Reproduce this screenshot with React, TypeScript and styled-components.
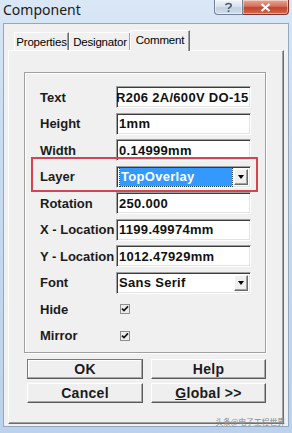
import React from "react";
import styled, { createGlobalStyle } from "styled-components";

const GlobalStyle = createGlobalStyle`
  html, body { margin: 0; padding: 0; background: #c8daef; }
  body { font-family: "Liberation Sans", Arial, sans-serif; }
`;

const Window = styled.div`
  position: relative;
  width: 292px;
  height: 433px;
  display: flex;
  flex-direction: column;
  overflow: hidden;
  background: linear-gradient(180deg, #d9e7f6 0%, #c9dcf1 30%, #bcd2ec 100%);
`;

const TitleBar = styled.div`
  height: 23px;
  display: flex;
  align-items: flex-start;
  padding-left: 3px;
`;

const Title = styled.div`
  font-family: "Noto Sans", "Liberation Sans", sans-serif;
  font-size: 14px;
  color: #1a1a1a;
  margin-top: 0px;
  line-height: 19px;
`;

const Controls = styled.div`
  margin-left: auto;
  margin-right: 3px;
  display: flex;
`;

const CapButton = styled.div<{ $close?: boolean }>`
  width: ${(p) => (p.$close ? 46 : 29)}px;
  height: 15px;
  box-sizing: border-box;
  display: flex;
  align-items: center;
  justify-content: center;
  border: 1px solid ${(p) => (p.$close ? "#7d3226" : "#71829a")};
  border-top: none;
  ${(p) => (p.$close ? "border-left: none;" : "")}
  border-radius: ${(p) => (p.$close ? "0 0 4px 0" : "0 0 0 4px")};
  background: ${(p) =>
    p.$close
      ? "linear-gradient(180deg, #e8a898 0%, #d3705c 45%, #c2432c 55%, #d7684c 100%)"
      : "linear-gradient(180deg, #eef3f9 0%, #d9e3ee 45%, #c1d0e1 55%, #d3dfeb 100%)"};
  box-shadow: inset 0 0 0 1px rgba(255, 255, 255, 0.45);
`;

const Body = styled.div`
  margin: 0 3px 6px 3px;
  background: #f0f0f0;
  border: 1px solid #93a7bf;
  padding: 6px 4px 2px 4px;
  display: flex;
  flex-direction: column;
`;

const TabStrip = styled.div`
  height: 20px;
  display: flex;
  align-items: flex-end;
  padding-left: 6px;
  position: relative;
  z-index: 1;
`;

const Tab = styled.div<{ $active?: boolean; $w: number }>`
  width: ${(p) => p.$w}px;
  height: ${(p) => (p.$active ? 21 : 18)}px;
  box-sizing: border-box;
  margin: ${(p) => (p.$active ? "0 -1px -1px -1px" : "0")};
  background: #f0f0f0;
  border-top: 1px solid #ffffff;
  border-left: 1px solid #ffffff;
  border-right: 1px solid #6d6d6d;
  box-shadow: inset -1px 0 #a0a0a0;
  font-size: 11.5px;
  letter-spacing: -0.2px;
  color: #000;
  display: flex;
  align-items: ${(p) => (p.$active ? "flex-start" : "center")};
  padding-top: ${(p) => (p.$active ? 2 : 0)}px;
  justify-content: center;
  line-height: 14px;
`;

const Panel = styled.div`
  height: 374px;
  box-sizing: border-box;
  border-top: 1px solid #ffffff;
  border-left: 1px solid #ffffff;
  border-right: 1px solid #6d6d6d;
  border-bottom: 1px solid #6d6d6d;
  box-shadow: inset -1px -1px #a0a0a0;
  padding: 21px 17px 0 15px;
  display: flex;
  flex-direction: column;
`;

const Group = styled.div`
  height: 281px;
  box-sizing: border-box;
  border: 1px solid #a0a0a0;
  box-shadow: 1px 1px 0 #ffffff, inset 1px 1px 0 #ffffff;
  padding: 13px 14px 0 15px;
  display: flex;
  flex-direction: column;
  gap: 4.5px;
  position: relative;
`;

const Row = styled.div`
  height: 22px;
  display: grid;
  grid-template-columns: 76px 1fr;
  align-items: center;
`;

const Label = styled.div`
  font-size: 13px;
  font-weight: bold;
  color: #1b1b1b;
  white-space: nowrap;
`;

const Field = styled.div`
  height: 22px;
  box-sizing: border-box;
  background: #ffffff;
  border-top: 1px solid #a0a0a0;
  border-left: 1px solid #a0a0a0;
  border-right: 1px solid #ffffff;
  border-bottom: 1px solid #ffffff;
  box-shadow: inset 1px 1px 0 #3c3c3c, inset -1px -1px 0 #e3e3e3;
  display: flex;
  align-items: center;
  padding-left: 2px;
  overflow: hidden;
  position: relative;
`;

const FieldText = styled.span<{ $shift?: number }>`
  font-size: 13px;
  font-weight: bold;
  letter-spacing: 0.3px;
  color: #111;
  white-space: nowrap;
  margin-left: ${(p) => p.$shift ?? 0}px;
`;

const Selected = styled.div`
  flex: 1;
  height: 18px;
  margin: 0 2px 0 1px;
  background: #3399ff;
  outline: 1px dotted #1d3c66;
  display: flex;
  align-items: center;
  padding-left: 1px;
  font-size: 13px;
  font-weight: bold;
  letter-spacing: 0.3px;
  color: #ffffff;
`;

const Plain = styled.div`
  flex: 1;
  display: flex;
  align-items: center;
  font-size: 13px;
  font-weight: bold;
  letter-spacing: 0.3px;
  color: #111;
`;

const DropButton = styled.div`
  width: 14px;
  height: 16px;
  margin-right: 2px;
  box-sizing: border-box;
  background: #f0f0f0;
  border-top: 1px solid #ffffff;
  border-left: 1px solid #ffffff;
  border-right: 1px solid #6d6d6d;
  border-bottom: 1px solid #6d6d6d;
  box-shadow: inset -1px -1px #a0a0a0;
  display: flex;
  align-items: center;
  justify-content: center;
`;

const Arrow = styled.div`
  width: 0;
  height: 0;
  border-left: 3.5px solid transparent;
  border-right: 3.5px solid transparent;
  border-top: 4px solid #000;
`;

const Highlight = styled.div`
  position: absolute;
  left: 6px;
  top: 84px;
  width: 227px;
  height: 35px;
  box-sizing: border-box;
  border: 2px solid #d6454e;
  pointer-events: none;
`;

const Check = styled.div`
  width: 10px;
  height: 10px;
  margin-left: 4px;
  box-sizing: border-box;
  background: #ececec;
  border: 1px solid #8e8f8f;
  display: flex;
  align-items: center;
  justify-content: center;
`;

const Buttons = styled.div`
  margin: 6px 0 0 3px;
  width: 239px;
  display: grid;
  grid-template-columns: 116px 115px;
  column-gap: 8px;
  row-gap: 4px;
`;

const Button = styled.div<{ $default?: boolean }>`
  height: 20px;
  box-sizing: border-box;
  background: #efefef;
  border-top: 1px solid ${(p) => (p.$default ? "#7a7a7a" : "#ffffff")};
  border-left: 1px solid ${(p) => (p.$default ? "#7a7a7a" : "#ffffff")};
  border-right: 1px solid #5a5a5a;
  border-bottom: 1px solid #5a5a5a;
  box-shadow: inset -1px -1px #a8a8a8${(p) => (p.$default ? ", inset 1px 1px #ffffff" : "")};
  display: flex;
  align-items: center;
  justify-content: center;
  font-size: 14px;
  font-weight: bold;
  color: #1b1b1b;
  letter-spacing: 0.3px;
`;

const Mnemonic = styled.span`
  text-decoration: underline;
`;

const Watermark = styled.div`
  position: absolute;
  right: 7px;
  bottom: 6px;
  font-family: "Noto Sans CJK SC", sans-serif;
  font-size: 8px;
  color: #8a8a8a;
  letter-spacing: -0.2px;
`;

const CheckMark = () => (
  <svg width="8" height="8" viewBox="0 0 8 8">
    <path d="M1 3.6 L3 5.6 L7 1.4" stroke="#111" strokeWidth="1.6" fill="none" />
  </svg>
);

const rows: { label: string; value: string; shift?: number }[] = [
  { label: "Text", value: "R206 2A/600V DO-15", shift: -3 },
  { label: "Height", value: "1mm" },
  { label: "Width", value: "0.14999mm" },
];

const rows2: { label: string; value: string }[] = [
  { label: "Rotation", value: "250.000" },
  { label: "X - Location", value: "1199.49974mm" },
  { label: "Y - Location", value: "1012.47929mm" },
];

export default function App() {
  return (
    <>
      <GlobalStyle />
      <Window>
        <TitleBar>
          <Title>Component</Title>
          <Controls>
            <CapButton>
              <svg width="9" height="11" viewBox="0 0 9 11">
                <path
                  d="M1.8 3.2 C1.8 1 7.2 1 7.2 3.4 C7.2 5 4.5 5.2 4.5 7"
                  stroke="#4a5a70"
                  strokeWidth="1.6"
                  fill="none"
                />
                <rect x="3.7" y="8.3" width="1.7" height="1.7" fill="#4a5a70" />
              </svg>
            </CapButton>
            <CapButton $close>
              <svg width="11" height="9" viewBox="0 0 11 9">
                <path d="M1.5 1 L9.5 8 M9.5 1 L1.5 8" stroke="#ffffff" strokeWidth="2.2" />
              </svg>
            </CapButton>
          </Controls>
        </TitleBar>
        <Body>
          <TabStrip>
            <Tab $w={55}>Properties</Tab>
            <Tab $w={62}>Designator</Tab>
            <Tab $w={60} $active>
              Comment
            </Tab>
          </TabStrip>
          <Panel>
            <Group>
              {rows.map((r) => (
                <Row key={r.label}>
                  <Label>{r.label}</Label>
                  <Field>
                    <FieldText $shift={r.shift}>{r.value}</FieldText>
                  </Field>
                </Row>
              ))}
              <Row>
                <Label>Layer</Label>
                <Field>
                  <Selected>TopOverlay</Selected>
                  <DropButton>
                    <Arrow />
                  </DropButton>
                </Field>
              </Row>
              {rows2.map((r) => (
                <Row key={r.label}>
                  <Label>{r.label}</Label>
                  <Field>
                    <FieldText>{r.value}</FieldText>
                  </Field>
                </Row>
              ))}
              <Row>
                <Label>Font</Label>
                <Field>
                  <Plain>Sans Serif</Plain>
                  <DropButton>
                    <Arrow />
                  </DropButton>
                </Field>
              </Row>
              <Row>
                <Label>Hide</Label>
                <Check>
                  <CheckMark />
                </Check>
              </Row>
              <Row>
                <Label>Mirror</Label>
                <Check>
                  <CheckMark />
                </Check>
              </Row>
              <Highlight />
            </Group>
            <Buttons>
              <Button $default>OK</Button>
              <Button>Help</Button>
              <Button>Cancel</Button>
              <Button>
                <span>
                  <Mnemonic>G</Mnemonic>lobal &gt;&gt;
                </span>
              </Button>
            </Buttons>
          </Panel>
        </Body>
        <Watermark>头条@电子工程世界</Watermark>
      </Window>
    </>
  );
}
